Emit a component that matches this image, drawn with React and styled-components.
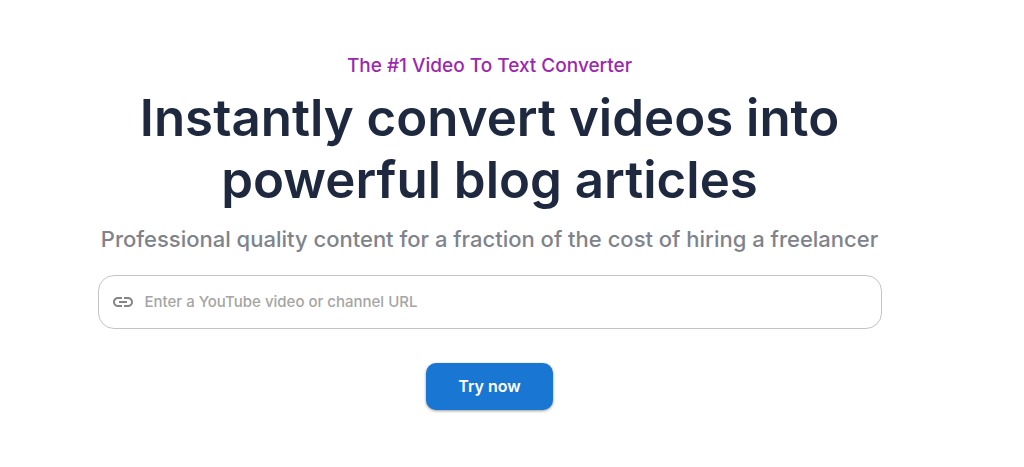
import React, { useState } from "react";
import styled, { createGlobalStyle } from "styled-components";
import { MdInsertLink } from "react-icons/md";

function App() {
  const [url, setUrl] = useState("");

  return (
    <>
      <GlobalStyle />
      <Hero>
        <Content>
          <Tagline>The #1 Video To Text Converter</Tagline>
          <Title>Instantly convert videos into powerful blog articles</Title>
          <SubTitle>
            Professional quality content for a fraction of the cost of hiring a
            freelancer
          </SubTitle>
          <Form onSubmit={(e) => e.preventDefault()}>
            <UrlField>
              <MdInsertLink aria-hidden="true" />
              <UrlInput
                type="text"
                aria-label="YouTube video or channel URL"
                placeholder="Enter a YouTube video or channel URL"
                value={url}
                onChange={(e) => setUrl(e.target.value)}
              />
            </UrlField>
            <TryButton type="submit">Try now</TryButton>
          </Form>
        </Content>
      </Hero>
    </>
  );
}

export default App;

const GlobalStyle = createGlobalStyle`
  * {
    box-sizing: border-box;
  }

  body {
    margin: 0;
    background-color: #fff;
    font-family: Inter, "Open Sans", sans-serif;
  }
`;

const Hero = styled.main`
  display: flex;
  justify-content: center;
  padding: 53px 69px 56px 24px;
`;

const Content = styled.section`
  width: 100%;
  max-width: 784px;
  text-align: center;
`;

const Tagline = styled.p`
  margin: 0;
  font-size: 19px;
  font-weight: 500;
  line-height: 26px;
  color: #9c27b0;
`;

const Title = styled.h1`
  margin: 8px 0 0;
  font-size: 51px;
  font-weight: 600;
  line-height: 62px;
  color: #1e293f;
`;

const SubTitle = styled.h2`
  margin: 12px 0 0;
  font-size: 22px;
  font-weight: 500;
  line-height: 32px;
  color: #7f838c;
`;

const Form = styled.form`
  display: flex;
  flex-direction: column;
  align-items: center;
  gap: 34px;
  margin-top: 20px;
`;

const UrlField = styled.label`
  display: flex;
  align-items: center;
  gap: 10px;
  width: 100%;
  height: 54px;
  padding: 0 12px;
  border: 1px solid #c4c4c4;
  border-radius: 16px;

  svg {
    flex: none;
    width: 24px;
    height: 24px;
    color: #858585;
  }
`;

const UrlInput = styled.input`
  flex: 1;
  min-width: 0;
  padding: 0;
  border: none;
  outline: none;
  background: none;
  font-family: inherit;
  font-size: 15px;
  font-weight: 500;
  line-height: 24px;
  color: #1e293f;

  &::placeholder {
    color: #a5a5a5;
    opacity: 1;
  }
`;

const TryButton = styled.button`
  padding: 12px 32px;
  border: none;
  border-radius: 10px;
  background-color: #1976d2;
  box-shadow: 0 1px 3px rgba(0, 0, 0, 0.4);
  font-family: inherit;
  font-size: 16px;
  font-weight: 600;
  line-height: 23px;
  color: #fff;
  cursor: pointer;

  &:hover {
    background-color: #1565c0;
  }
`;
